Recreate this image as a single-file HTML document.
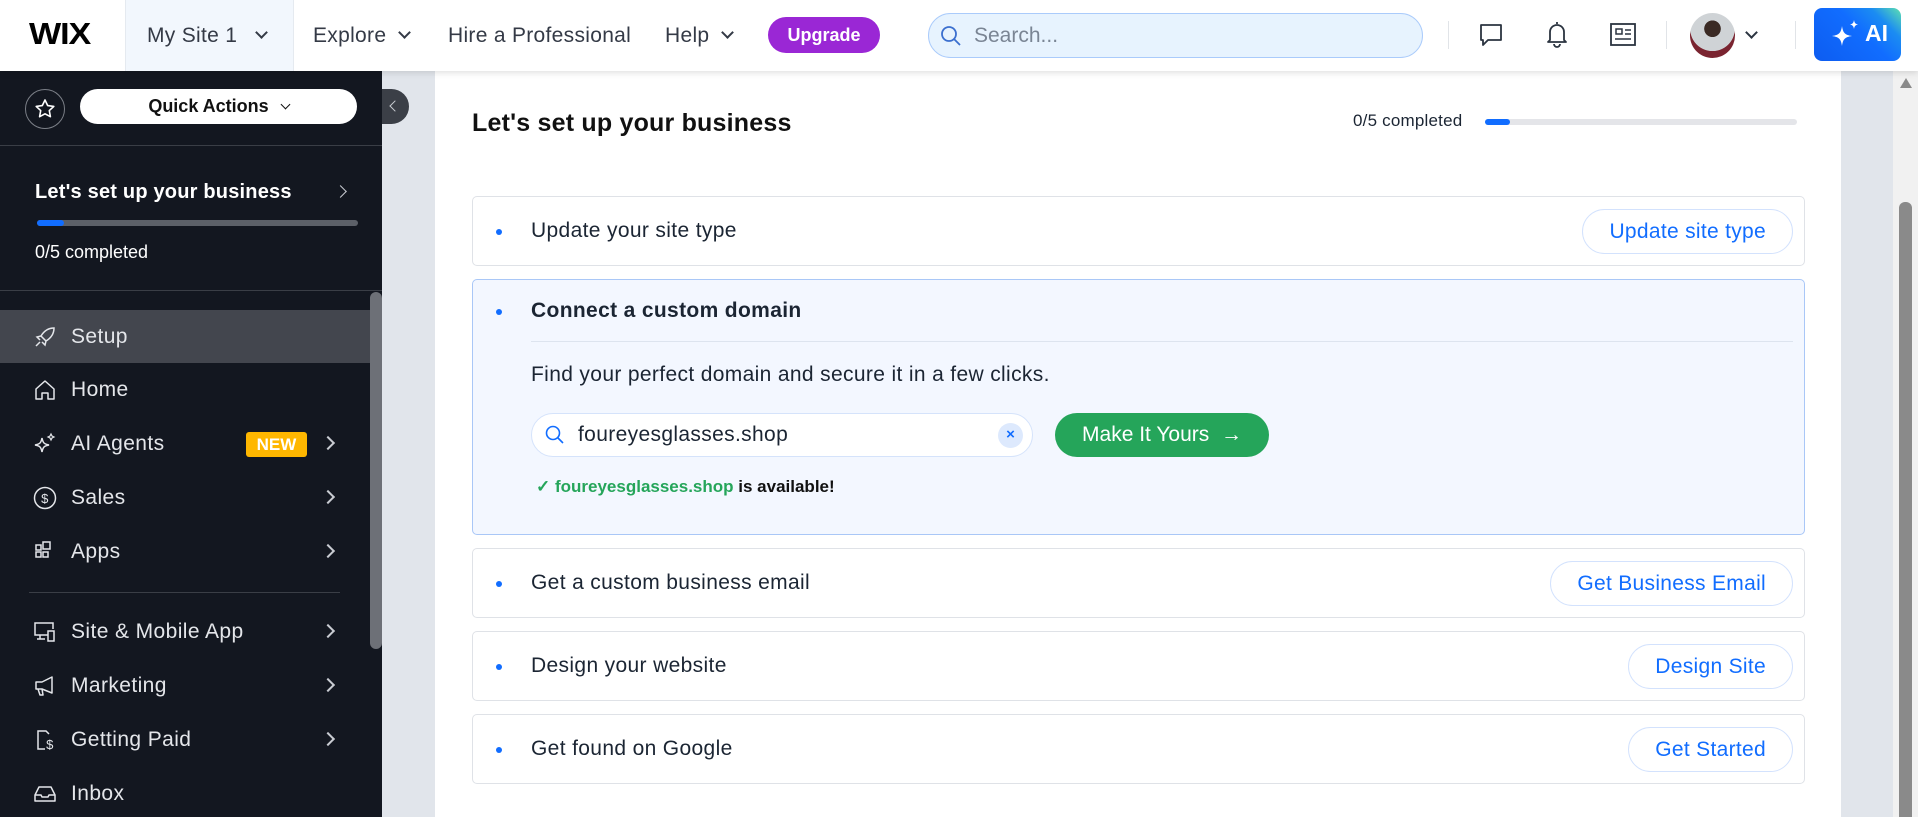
<!DOCTYPE html>
<html style="overflow:hidden;height:817px"><head><meta charset="utf-8">
<style>
*{box-sizing:border-box;margin:0;padding:0}
body{width:1918px;height:817px;overflow:hidden;font-family:"Liberation Sans",Arial,sans-serif;background:#e1e5eb;position:relative;color:#20303c}
.abs{position:absolute}
#top{left:0;top:0;width:1918px;height:71px;background:#fff;box-shadow:0 2px 6px rgba(0,0,0,.12);z-index:5}
.nav{position:absolute;top:0;height:71px;line-height:71px;font-size:21px;color:#343a46;letter-spacing:.3px}
.chev{display:inline-block;width:9px;height:9px;border-right:2px solid #343a46;border-bottom:2px solid #343a46;transform:rotate(45deg);margin-left:14px;position:relative;top:-5px}
#side{left:0;top:71px;width:382px;height:746px;background:#131720;color:#e6e8ec;overflow:hidden}
.item{position:absolute;left:0;width:370px;height:53px;line-height:53px;font-size:21px;color:#e4e6ea;letter-spacing:.4px}
.item .t{position:absolute;left:71px}
.item svg{position:absolute;left:33px;top:15px}
.item .r{position:absolute;left:323px;top:21px;width:10px;height:10px;border-right:2px solid #c9ccd2;border-top:2px solid #c9ccd2;transform:rotate(45deg)}
#card{left:435px;top:60px;width:1406px;height:757px;background:#fff;border-radius:8px 8px 0 0}
.row{position:absolute;left:472px;width:1333px;border:1px solid #dfe2e7;border-radius:5px;background:#fff}
.row .dot{position:absolute;left:23px;width:6px;height:6px;border-radius:50%;background:#116dff}
.row .lbl{position:absolute;left:58px;font-size:21px;color:#1b2533;letter-spacing:.35px}
.btn{position:absolute;right:11px;height:45px;line-height:43px;border:1px solid #d3e2fd;border-radius:23px;color:#116dff;font-size:21px;padding:0 26px;background:#fff;letter-spacing:.3px}
</style></head><body>

<div id="top" class="abs">
  <div class="abs" style="left:29px;top:16px;font-size:31px;font-weight:bold;color:#000;letter-spacing:-1px;transform:scaleX(1.1);transform-origin:left">WIX</div>
  <div class="abs" style="left:125px;top:0;width:169px;height:71px;background:#f2f7fd;border-left:1px solid #e5eaf0;border-right:1px solid #e5eaf0"></div>
  <div class="nav" style="left:147px">My Site 1<span class="chev" style="margin-left:20px"></span></div>
  <div class="nav" style="left:313px">Explore<span class="chev"></span></div>
  <div class="nav" style="left:448px">Hire a Professional</div>
  <div class="nav" style="left:665px">Help<span class="chev"></span></div>
  <div class="abs" style="left:768px;top:17px;width:112px;height:36px;border-radius:18px;background:#9a27d5;color:#fff;font-weight:bold;font-size:18px;line-height:36px;text-align:center">Upgrade</div>
  <div class="abs" style="left:928px;top:13px;width:495px;height:45px;border-radius:23px;background:#e7f3fe;border:1px solid #aacbfb"></div>
  <svg class="abs" style="left:940px;top:25px" width="22" height="22" viewBox="0 0 22 22"><circle cx="9" cy="9" r="7" fill="none" stroke="#3b6fcf" stroke-width="1.8"/><path d="M14 14l6 6" stroke="#3b6fcf" stroke-width="1.8"/></svg>
  <div class="abs" style="left:974px;top:24px;font-size:21px;color:#7a8594">Search...</div>
  <div class="abs" style="left:1448px;top:21px;width:1px;height:28px;background:#e1e4e8"></div>
  <svg class="abs" style="left:1478px;top:22px" width="26" height="26" viewBox="0 0 26 26"><path d="M3 3h20v15H10l-5 5v-5H3z" fill="none" stroke="#2b3440" stroke-width="1.8" stroke-linejoin="round"/></svg>
  <svg class="abs" style="left:1544px;top:20px" width="26" height="28" viewBox="0 0 26 28"><path d="M13 2v2M6 20V12a7 7 0 0114 0v8l2 2H4z" fill="none" stroke="#2b3440" stroke-width="1.8" stroke-linejoin="round"/><path d="M10 24a3 3 0 006 0" fill="none" stroke="#2b3440" stroke-width="1.8"/></svg>
  <svg class="abs" style="left:1610px;top:23px" width="26" height="24" viewBox="0 0 26 24"><rect x="1" y="1" width="24" height="21" fill="none" stroke="#2b3440" stroke-width="1.8"/><rect x="6" y="6" width="6" height="5" fill="none" stroke="#2b3440" stroke-width="1.5"/><path d="M15 7h6M15 11h6M5 16h16" stroke="#2b3440" stroke-width="1.6"/></svg>
  <div class="abs" style="left:1666px;top:21px;width:1px;height:28px;background:#e1e4e8"></div>
  <div class="abs" style="left:1690px;top:13px;width:45px;height:45px;border-radius:50%;background:radial-gradient(circle at 50% 35%,#3a2a24 0 22%,#cfd3d6 23% 60%,#7a2430 61%);overflow:hidden"></div>
  <div class="abs" style="left:1747px;top:28px;width:9px;height:9px;border-right:2px solid #2b3440;border-bottom:2px solid #2b3440;transform:rotate(45deg)"></div>
  <div class="abs" style="left:1795px;top:21px;width:1px;height:28px;background:#e1e4e8"></div>
  <div class="abs" style="left:1814px;top:8px;width:87px;height:53px;border-radius:8px;background:linear-gradient(225deg,#5ee0b0 0%,#1b8cf2 22%,#116dff 45%,#0d5cf0 100%)"></div>
  <svg class="abs" style="left:1830px;top:18px" width="34" height="32" viewBox="0 0 34 32"><path d="M12 8c1 7 3 9 10 10-7 1-9 3-10 10-1-7-3-9-10-10 7-1 9-3 10-10z" fill="#fff"/><path d="M24 2c.5 3 1.5 4 4 4.5-2.5.5-3.5 1.5-4 4.5-.5-3-1.5-4-4-4.5 2.5-.5 3.5-1.5 4-4.5z" fill="#fff"/></svg>
  <div class="abs" style="left:1865px;top:20px;color:#fff;font-size:23px;font-weight:bold">AI</div>
</div>

<div id="side" class="abs">
  <div class="abs" style="left:25px;top:18px;width:40px;height:40px;border-radius:50%;border:1px solid #7b7f87"></div>
  <svg class="abs" style="left:34px;top:27px" width="22" height="22" viewBox="0 0 22 22"><path d="M11 2l2.7 5.6 6.1.8-4.5 4.2 1.1 6.1L11 15.8l-5.4 2.9 1.1-6.1L2.2 8.4l6.1-.8z" fill="none" stroke="#fff" stroke-width="1.6" stroke-linejoin="round"/></svg>
  <div class="abs" style="left:80px;top:18px;width:277px;height:35px;border-radius:18px;background:#fff;color:#111;font-weight:bold;font-size:18px;line-height:35px;text-align:center">Quick Actions <span style="display:inline-block;width:7px;height:7px;border-right:1.5px solid #111;border-bottom:1.5px solid #111;transform:rotate(45deg);margin-left:8px;position:relative;top:-4px"></span></div>
  <div class="abs" style="left:0;top:74px;width:382px;height:1px;background:#3a3e46"></div>
  <div class="abs" style="left:35px;top:110px;font-size:20px;font-weight:bold;color:#fff;letter-spacing:.2px">Let's set up your business</div>
  <div class="abs" style="left:336px;top:116px;width:9px;height:9px;border-right:1.5px solid #c9ccd2;border-top:1.5px solid #c9ccd2;transform:rotate(45deg)"></div>
  <div class="abs" style="left:37px;top:149px;width:321px;height:6px;border-radius:3px;background:#5c6068"></div>
  <div class="abs" style="left:37px;top:149px;width:27px;height:6px;border-radius:3px;background:#116dff"></div>
  <div class="abs" style="left:35px;top:171px;font-size:18px;color:#fff">0/5 completed</div>
  <div class="abs" style="left:0;top:219px;width:382px;height:1px;background:#3a3e46"></div>

  <div class="item" style="top:239px;background:#43464e"><svg width="24" height="24" viewBox="0 0 24 24"><path d="M21 3c-6 0-10 3-13 8l5 5c5-3 8-7 8-13zM8 11l-4 1 3 3M13 16l-1 4-3-3M3 21l4-4M5 19l-1 1" fill="none" stroke="#e4e6ea" stroke-width="1.5"/></svg><span class="t">Setup</span></div>
  <div class="item" style="top:292px"><svg width="24" height="24" viewBox="0 0 24 24"><path d="M3 11l9-8 9 8v10h-6v-6h-6v6H3z" fill="none" stroke="#e4e6ea" stroke-width="1.5" stroke-linejoin="round"/></svg><span class="t">Home</span></div>
  <div class="item" style="top:346px"><svg width="24" height="24" viewBox="0 0 24 24"><path d="M9 6c1 5 2 6 7 7-5 1-6 2-7 7-1-5-2-6-7-7 5-1 6-2 7-7z" fill="none" stroke="#e4e6ea" stroke-width="1.5"/><path d="M18 2l1 2 2 1-2 1-1 2-1-2-2-1 2-1z" fill="none" stroke="#e4e6ea" stroke-width="1.2"/></svg><span class="t">AI Agents</span><div class="abs" style="left:246px;top:15px;width:61px;height:25px;background:#ffb700;border-radius:3px;color:#fff;font-weight:bold;font-size:17px;line-height:25px;text-align:center;letter-spacing:0">NEW</div><span class="r"></span></div>
  <div class="item" style="top:400px"><svg width="24" height="24" viewBox="0 0 24 24"><circle cx="12" cy="12" r="10.5" fill="none" stroke="#e4e6ea" stroke-width="1.5"/><text x="12" y="17" font-size="13" fill="#e4e6ea" text-anchor="middle" font-family="Liberation Sans">$</text></svg><span class="t">Sales</span><span class="r"></span></div>
  <div class="item" style="top:454px"><svg width="24" height="24" viewBox="0 0 24 24"><rect x="3" y="12" width="5" height="5" fill="none" stroke="#e4e6ea" stroke-width="1.5"/><rect x="10" y="12" width="5" height="5" fill="none" stroke="#e4e6ea" stroke-width="1.5"/><rect x="3" y="5" width="5" height="5" fill="none" stroke="#e4e6ea" stroke-width="1.5"/><rect x="10" y="2" width="7" height="7" fill="none" stroke="#e4e6ea" stroke-width="1.5"/></svg><span class="t">Apps</span><span class="r"></span></div>
  <div class="abs" style="left:29px;top:521px;width:311px;height:1px;background:#3a3e46"></div>
  <div class="item" style="top:534px"><svg width="24" height="24" viewBox="0 0 24 24"><path d="M15 15H2V3h18v6M7 15v4M4 19h8" fill="none" stroke="#e4e6ea" stroke-width="1.5"/><rect x="15" y="11" width="6" height="10" fill="none" stroke="#e4e6ea" stroke-width="1.5"/></svg><span class="t">Site &amp; Mobile App</span><span class="r"></span></div>
  <div class="item" style="top:588px"><svg width="24" height="24" viewBox="0 0 24 24"><path d="M3 8h6l10-5v16L9 15H3zM5 15l2 6h3l-1-6" fill="none" stroke="#e4e6ea" stroke-width="1.5" stroke-linejoin="round"/></svg><span class="t">Marketing</span><span class="r"></span></div>
  <div class="item" style="top:642px"><svg width="24" height="24" viewBox="0 0 24 24"><path d="M12 21H5V3h8l3 3" fill="none" stroke="#e4e6ea" stroke-width="1.5"/><text x="17" y="21" font-size="13" fill="#e4e6ea" text-anchor="middle" font-family="Liberation Sans">$</text></svg><span class="t">Getting Paid</span><span class="r"></span></div>
  <div class="item" style="top:696px"><svg width="24" height="24" viewBox="0 0 24 24"><path d="M2 13l4-8h12l4 8v6H2zM2 13h6l1 2h6l1-2h6" fill="none" stroke="#e4e6ea" stroke-width="1.5" stroke-linejoin="round"/></svg><span class="t">Inbox</span></div>
  <div class="abs" style="left:370px;top:221px;width:12px;height:357px;border-radius:6px;background:#6d7077"></div>
</div>

<div class="abs" style="left:382px;top:89px;width:27px;height:35px;background:#3b3f47;border-radius:0 18px 18px 0"></div>
<div class="abs" style="left:391px;top:102px;width:8px;height:8px;border-left:1.5px solid #c9ccd2;border-bottom:1.5px solid #c9ccd2;transform:rotate(45deg)"></div>

<div id="card" class="abs"></div>
<div class="abs" style="left:1893px;top:71px;width:25px;height:746px;background:#f1f1f1"></div>
<div class="abs" style="left:1900px;top:78px;width:0;height:0;border-left:6px solid transparent;border-right:6px solid transparent;border-bottom:10px solid #8a8a8a"></div>
<div class="abs" style="left:1899px;top:202px;width:13px;height:615px;border-radius:6px 6px 0 0;background:#8a8a8a"></div>

<div class="abs" style="left:472px;top:109px;font-size:25px;font-weight:bold;color:#111;letter-spacing:.2px">Let's set up your business</div>
<div class="abs" style="left:1353px;top:111px;font-size:17px;color:#1b2533;letter-spacing:.2px">0/5 completed</div>
<div class="abs" style="left:1485px;top:119px;width:312px;height:6px;border-radius:3px;background:#e4e5e9"></div>
<div class="abs" style="left:1485px;top:119px;width:25px;height:6px;border-radius:3px;background:#116dff"></div>

<div class="row" style="top:196px;height:70px"><span class="dot" style="top:32px"></span><span class="lbl" style="top:22px">Update your site type</span><span class="btn" style="top:12px">Update site type</span></div>

<div class="row" style="top:279px;height:256px;background:#f3f7ff;border-color:#a9c7f7">
  <span class="dot" style="top:29px"></span>
  <span class="lbl" style="top:19px;font-weight:bold">Connect a custom domain</span>
  <div class="abs" style="left:58px;top:61px;width:1262px;height:1px;background:#dde4ef"></div>
  <span class="lbl" style="top:83px">Find your perfect domain and secure it in a few clicks.</span>
  <div class="abs" style="left:58px;top:133px;width:502px;height:44px;border-radius:22px;background:#fff;border:1px solid #d5e3fb"></div>
  <svg class="abs" style="left:72px;top:145px" width="20" height="20" viewBox="0 0 20 20"><circle cx="8" cy="8" r="6.5" fill="none" stroke="#116dff" stroke-width="1.6"/><path d="M13 13l5 5" stroke="#116dff" stroke-width="1.6"/></svg>
  <span class="lbl" style="left:105px;top:143px">foureyesglasses.shop</span>
  <div class="abs" style="left:525px;top:143px;width:25px;height:25px;border-radius:50%;background:#dde9fd;color:#116dff;text-align:center;line-height:24px;font-size:15px;font-weight:bold">×</div>
  <div class="abs" style="left:582px;top:133px;width:214px;height:44px;border-radius:22px;background:#25a55a;color:#fff;font-size:21px;line-height:44px;text-align:center">Make It Yours &nbsp;→</div>
  <div class="abs" style="left:63px;top:197px;font-size:17px;font-weight:bold;color:#111"><span style="color:#25a55a">✓ foureyesglasses.shop</span> is available!</div>
</div>

<div class="row" style="top:548px;height:70px"><span class="dot" style="top:32px"></span><span class="lbl" style="top:22px">Get a custom business email</span><span class="btn" style="top:12px">Get Business Email</span></div>
<div class="row" style="top:631px;height:70px"><span class="dot" style="top:32px"></span><span class="lbl" style="top:22px">Design your website</span><span class="btn" style="top:12px">Design Site</span></div>
<div class="row" style="top:714px;height:70px"><span class="dot" style="top:32px"></span><span class="lbl" style="top:22px">Get found on Google</span><span class="btn" style="top:12px">Get Started</span></div>

</body></html>
